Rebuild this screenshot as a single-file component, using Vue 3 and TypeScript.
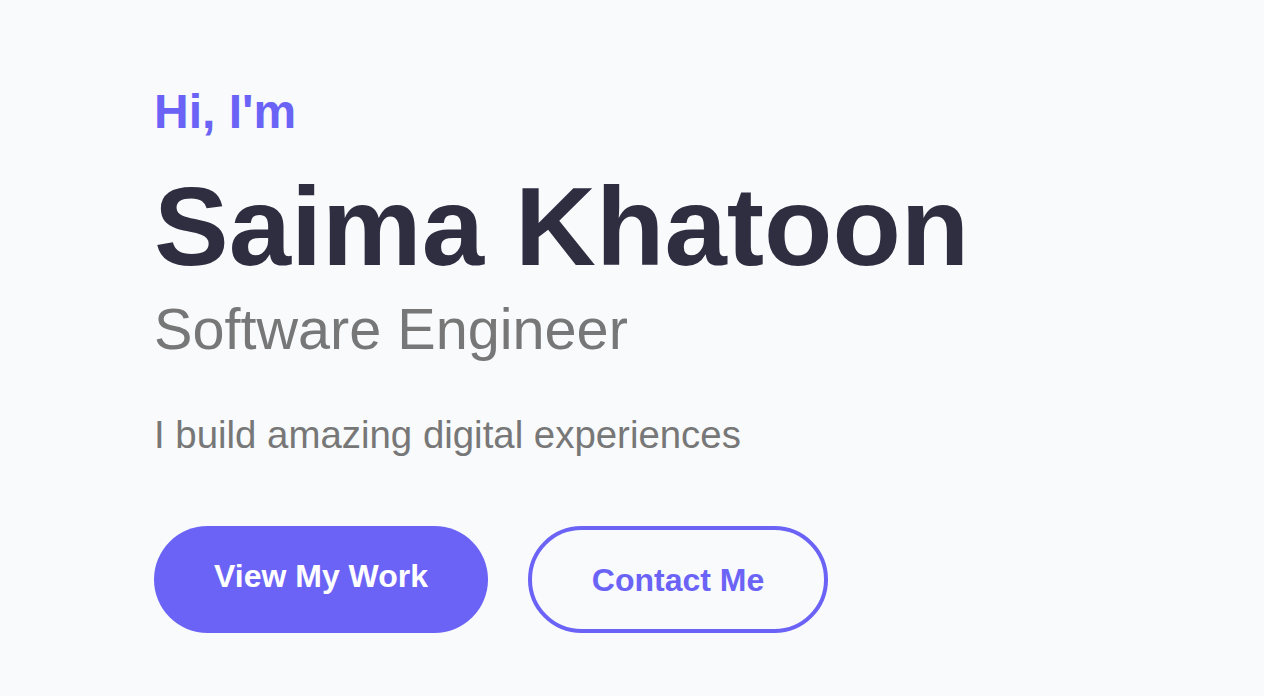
<script setup lang="ts">
const greeting: string = "Hi, I'm"
const fullName: string = 'Saima Khatoon'
const role: string = 'Software Engineer'
const tagline: string = 'I build amazing digital experiences'
</script>

<template>
  <main class="hero">
    <p class="greeting">{{ greeting }}</p>
    <h1 class="name">{{ fullName }}</h1>
    <h2 class="role">{{ role }}</h2>
    <p class="tagline">{{ tagline }}</p>
    <div class="actions">
      <a class="btn primary">View My Work</a>
      <a class="btn secondary">Contact Me</a>
    </div>
  </main>
</template>

<style scoped>
.hero {
  box-sizing: border-box;
  height: 696px;
  padding: 85px 154px 0;
  overflow: hidden;
  background: #f8fafc;
  color: #777;
  font-family: "Liberation Sans", Arial, sans-serif;
  white-space: nowrap;
}
.greeting {
  margin: 0 0 28px;
  color: #6b63f6;
  font-size: 48px;
  font-weight: 700;
  line-height: 54px;
}
.name {
  margin: 0;
  color: #2f2e41;
  font-size: 112px;
  font-weight: 700;
  line-height: 120px;
}
.role {
  margin: 8px 0 0;
  font-size: 57.6px;
  font-weight: 400;
  line-height: 68px;
}
.tagline {
  margin: 48px 0 0;
  font-size: 38.4px;
  line-height: 48px;
}
.actions {
  display: flex;
  gap: 40px;
  margin-top: 67px;
}
.btn {
  box-sizing: border-box;
  height: 107px;
  border-radius: 54px;
  font-size: 32px;
  font-weight: 700;
  line-height: 101px;
  text-align: center;
}
.primary {
  width: 334px;
  background: #6b63f6;
  color: #fff;
}
.secondary {
  width: 300px;
  border: 4px solid #6b63f6;
  color: #6b63f6;
}
</style>

<style>
body { margin: 0; background: #f8fafc; }
</style>
